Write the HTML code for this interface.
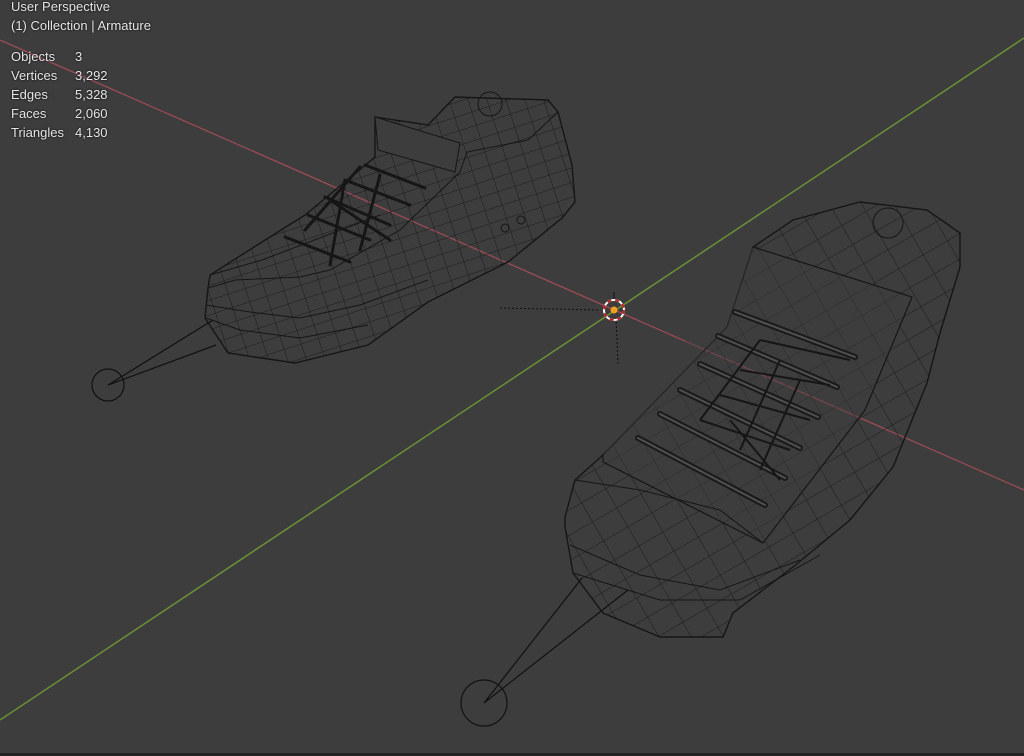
<!DOCTYPE html>
<html><head><style>
html,body{margin:0;padding:0;background:#3d3d3d;width:1024px;height:756px;overflow:hidden;font-family:"Liberation Sans",sans-serif;}
.t{position:absolute;color:#e6e6e6;font-size:13px;line-height:19px;text-shadow:0 0 2px #000;}
</style></head><body>
<svg width="1024" height="756" style="position:absolute;left:0;top:0">
<defs>
<pattern id="g1" width="18" height="14" patternUnits="userSpaceOnUse" patternTransform="rotate(-18)">
<path d="M0 0H18M0 0V14" stroke="#1c1c1c" stroke-width="1" fill="none"/></pattern>
<pattern id="g2" width="28" height="22" patternUnits="userSpaceOnUse" patternTransform="rotate(-30)">
<path d="M0 0H28M0 0V22" stroke="#1c1c1c" stroke-width="1" fill="none"/></pattern>
</defs>
<rect width="1024" height="756" fill="#3d3d3d"/>
<rect y="753" width="1024" height="3" fill="#222"/>
<line x1="0" y1="40" x2="1024" y2="490" stroke="#9a4b55" stroke-width="1.3"/>
<line x1="0" y1="720" x2="1024" y2="38" stroke="#6b8f36" stroke-width="1.5"/>
<!-- left shoe -->
<path d="M208 288 L210 275 L262 242 L305 215 L375 157 L375 117 L428 125 L455 97 L548 100 L558 112 L572 165 L575 202 L562 218 L508 262 L428 302 L368 345 L295 363 L228 353 L205 318Z" fill="url(#g1)" stroke="#161616" stroke-width="1.4"/>
<path d="M208 288 L235 280 L300 277 L330 270 L400 230 L460 172" fill="none" stroke="#161616"/>
<path d="M210 275 L262 260 L380 215" fill="none" stroke="#161616"/>
<path d="M206 305 L250 312 L300 318 L360 305 L428 280" fill="none" stroke="#161616"/>
<path d="M206 318 L240 330 L300 338 L368 325" fill="none" stroke="#161616"/>
<path d="M375 117 L460 143 L455 172 L378 150Z" fill="#3d3d3d" stroke="#161616"/>
<path d="M460 172 L467 152 L528 140 L558 112" fill="none" stroke="#161616"/>
<ellipse cx="490" cy="104" rx="12" ry="12" fill="none" stroke="#161616"/>
<g stroke="#161616" stroke-width="3" fill="none" stroke-linecap="round">
<path d="M365 165 L425 188 M345 180 L410 205 M325 197 L390 225 M308 215 L370 240 M285 237 L350 262 M360 167 L305 230 M345 180 L330 265 M380 175 L360 250 M330 200 L390 240"/>
</g>
<circle cx="505" cy="228" r="4" fill="none" stroke="#161616"/><circle cx="521" cy="220" r="4" fill="none" stroke="#161616"/>
<!-- right shoe -->
<path d="M565 517 L575 480 L603 455 L727 327 L753 247 L793 220 L860 202 L927 210 L960 233 L960 267 L940 333 L927 383 L893 467 L850 520 L793 567 L733 613 L723 637 L660 637 L603 613 L573 573 L565 527Z" fill="url(#g2)" stroke="#161616" stroke-width="1.4"/>
<path d="M753 247 L912 297 L865 410 L763 543 L603 462 L603 455" fill="#3d3d3d" fill-opacity="0.45" stroke="#161616" stroke-width="1.2"/>
<path d="M575 480 L640 490 L720 510 L763 543" fill="none" stroke="#161616"/>
<path d="M570 545 L640 575 L720 590 L800 560" fill="none" stroke="#161616"/>
<path d="M573 573 L660 600 L740 600 L820 555" fill="none" stroke="#161616"/>
<g stroke="#1a1a1a" stroke-width="6" fill="none" stroke-linecap="round">
<path d="M735 312 L855 357 M718 336 L837 387 M700 364 L818 417 M680 390 L800 448 M660 414 L785 478 M638 438 L765 505"/>
</g>
<g stroke="#505050" stroke-width="2" fill="none" stroke-linecap="round">
<path d="M735 312 L855 357 M718 336 L837 387 M700 364 L818 417 M680 390 L800 448 M660 414 L785 478 M638 438 L765 505"/>
</g>
<g stroke="#161616" stroke-width="2" fill="none">
<path d="M760 340 L850 360 M740 370 L830 385 M720 395 L810 420 M700 420 L790 450 M760 340 L700 420 M780 360 L740 450 M800 380 L760 470 M730 420 L780 480"/>
</g>
<circle cx="888" cy="223" r="15" fill="none" stroke="#161616"/>
<!-- armature -->
<g stroke="#111" stroke-width="1.2" fill="none">
<circle cx="108" cy="385" r="16"/><path d="M108 385 L213 320 M108 385 L216 345"/>
<circle cx="484" cy="703" r="23"/><path d="M484 703 L582 578 M484 703 L628 590"/>
</g>
<!-- 3d cursor -->
<line x1="500" y1="308" x2="600" y2="310" stroke="#111" stroke-dasharray="2,2"/>
<line x1="616" y1="318" x2="618" y2="365" stroke="#111" stroke-dasharray="2,2"/>
<line x1="614" y1="292" x2="614" y2="300" stroke="#111"/>
<circle cx="614" cy="310" r="10" fill="none" stroke="#fff" stroke-width="2"/>
<circle cx="614" cy="310" r="10" fill="none" stroke="#c02020" stroke-width="2" stroke-dasharray="4,4"/>
<circle cx="614" cy="310" r="3.5" fill="#f0a020"/>
</svg>
<div class="t" style="left:11px;top:-3px">User Perspective</div>
<div class="t" style="left:11px;top:16px">(1) Collection | Armature</div>
<div class="t" style="left:11px;top:47px">Objects<br>Vertices<br>Edges<br>Faces<br>Triangles</div>
<div class="t" style="left:75px;top:47px">3<br>3,292<br>5,328<br>2,060<br>4,130</div>
</body></html>
